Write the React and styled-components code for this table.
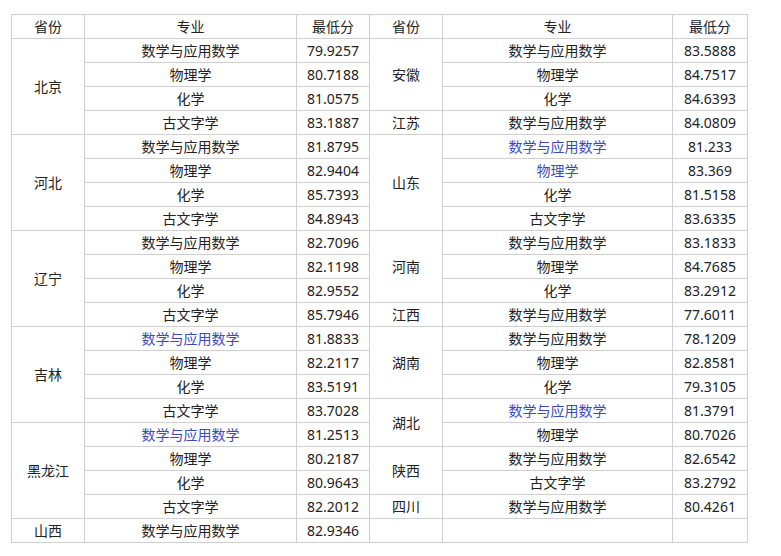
import React from 'react'
import styled, { createGlobalStyle } from 'styled-components'

const GlobalStyle = createGlobalStyle`
  html, body {
    margin: 0;
    padding: 0;
    background: #fff;
  }
  body {
    font-family: "Noto Sans", "Noto Sans CJK SC", sans-serif;
  }
`

const Page = styled.div`
  padding: 14px 0 0 11px;
`

const Table = styled.table`
  border-collapse: collapse;
  table-layout: fixed;
  width: 736px;
  font-size: 14px;
  color: #222;
`

const Col = styled.col`
  width: ${p => p.$w}px;
`

const HeadCell = styled.th`
  height: 23px;
  padding: 0;
  border: 1px solid #cfcfcf;
  font-weight: normal;
  text-align: center;
  vertical-align: middle;
  line-height: 23px;
`

const Cell = styled.td`
  height: 23px;
  padding: 0;
  border: 1px solid #cfcfcf;
  text-align: center;
  vertical-align: middle;
  line-height: 23px;
  white-space: nowrap;
  color: ${p => (p.$link ? '#3a4bbd' : 'inherit')};
`

// 左右两组: [省份, rowspan] 或 null, 专业, 分数, 是否蓝色
const left = [
  ['北京', 4, '数学与应用数学', '79.9257'],
  [null, 0, '物理学', '80.7188'],
  [null, 0, '化学', '81.0575'],
  [null, 0, '古文字学', '83.1887'],
  ['河北', 4, '数学与应用数学', '81.8795'],
  [null, 0, '物理学', '82.9404'],
  [null, 0, '化学', '85.7393'],
  [null, 0, '古文字学', '84.8943'],
  ['辽宁', 4, '数学与应用数学', '82.7096'],
  [null, 0, '物理学', '82.1198'],
  [null, 0, '化学', '82.9552'],
  [null, 0, '古文字学', '85.7946'],
  ['吉林', 4, '数学与应用数学', '81.8833', true],
  [null, 0, '物理学', '82.2117'],
  [null, 0, '化学', '83.5191'],
  [null, 0, '古文字学', '83.7028'],
  ['黑龙江', 4, '数学与应用数学', '81.2513', true],
  [null, 0, '物理学', '80.2187'],
  [null, 0, '化学', '80.9643'],
  [null, 0, '古文字学', '82.2012'],
  ['山西', 1, '数学与应用数学', '82.9346'],
]

const right = [
  ['安徽', 3, '数学与应用数学', '83.5888'],
  [null, 0, '物理学', '84.7517'],
  [null, 0, '化学', '84.6393'],
  ['江苏', 1, '数学与应用数学', '84.0809'],
  ['山东', 4, '数学与应用数学', '81.233', true],
  [null, 0, '物理学', '83.369', true],
  [null, 0, '化学', '81.5158'],
  [null, 0, '古文字学', '83.6335'],
  ['河南', 3, '数学与应用数学', '83.1833'],
  [null, 0, '物理学', '84.7685'],
  [null, 0, '化学', '83.2912'],
  ['江西', 1, '数学与应用数学', '77.6011'],
  ['湖南', 3, '数学与应用数学', '78.1209'],
  [null, 0, '物理学', '82.8581'],
  [null, 0, '化学', '79.3105'],
  ['湖北', 2, '数学与应用数学', '81.3791', true],
  [null, 0, '物理学', '80.7026'],
  ['陕西', 2, '数学与应用数学', '82.6542'],
  [null, 0, '古文字学', '83.2792'],
  ['四川', 1, '数学与应用数学', '80.4261'],
  ['', 1, '', ''],
]

const Half = ({ row }) => {
  const [prov, span, major, score, link] = row
  return (
    <>
      {prov !== null && <Cell rowSpan={span}>{prov}</Cell>}
      <Cell $link={link}>{major}</Cell>
      <Cell>{score}</Cell>
    </>
  )
}

export default function App() {
  return (
    <Page>
      <GlobalStyle />
      <Table>
        <colgroup>
          <Col $w={73} />
          <Col $w={212} />
          <Col $w={73} />
          <Col $w={73} />
          <Col $w={230} />
          <Col $w={75} />
        </colgroup>
        <thead>
          <tr>
            <HeadCell>省份</HeadCell>
            <HeadCell>专业</HeadCell>
            <HeadCell>最低分</HeadCell>
            <HeadCell>省份</HeadCell>
            <HeadCell>专业</HeadCell>
            <HeadCell>最低分</HeadCell>
          </tr>
        </thead>
        <tbody>
          {left.map((row, i) => (
            <tr key={i}>
              <Half row={row} />
              <Half row={right[i]} />
            </tr>
          ))}
        </tbody>
      </Table>
    </Page>
  )
}
